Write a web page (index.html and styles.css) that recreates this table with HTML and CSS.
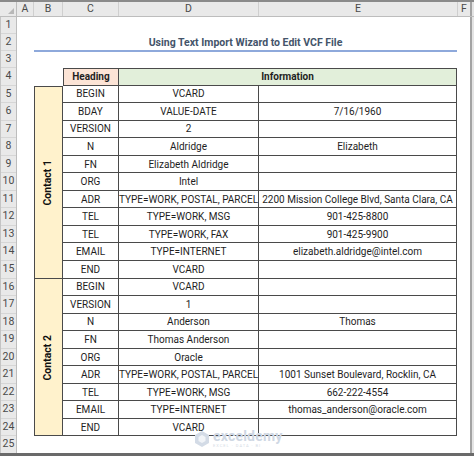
FILE: index.html
```html
<!DOCTYPE html>
<html>
<head>
<meta charset="utf-8">
<link rel="stylesheet" href="styles.css">
</head>
<body>
<div class="window">
  <div class="topband"></div>
  <div class="colheads">
    <div class="ch corner"><span class="tri"></span></div>
    <div class="ch col-a">A</div>
    <div class="ch col-b">B</div>
    <div class="ch col-c">C</div>
    <div class="ch col-d">D</div>
    <div class="ch col-e">E</div>
    <div class="ch col-f">F</div>
    <div class="frame"></div>
  </div>
  <div class="body">
    <div class="rowheads">
      <div class="rh r17">1</div><div class="rh r17">2</div><div class="rh r17">3</div>
      <div class="rh rt">4</div><div class="rh rt">5</div><div class="rh rt">6</div><div class="rh rt">7</div>
      <div class="rh rt">8</div><div class="rh rt">9</div><div class="rh rt">10</div><div class="rh rt">11</div>
      <div class="rh rt">12</div><div class="rh rt">13</div><div class="rh rt">14</div><div class="rh rt">15</div>
      <div class="rh rt">16</div><div class="rh rt">17</div><div class="rh rt">18</div><div class="rh rt">19</div>
      <div class="rh rt">20</div><div class="rh rt">21</div><div class="rh rt">22</div><div class="rh rt">23</div>
      <div class="rh rt">24</div><div class="rh rlast">25</div>
    </div>
    <div class="cells">
      <div class="row1"></div>
      <div class="row2"><div class="title">Using Text Import Wizard to Edit VCF File</div></div>
      <div class="row3"></div>
      <div class="table">
        <div class="blank"></div>
        <div class="c head">Heading</div>
        <div class="c info">Information</div>

        <div class="c contact contact1"><span>Contact 1</span></div>
        <div class="c">BEGIN</div><div class="c">VCARD</div><div class="c"></div>
        <div class="c">BDAY</div><div class="c">VALUE-DATE</div><div class="c">7/16/1960</div>
        <div class="c">VERSION</div><div class="c">2</div><div class="c"></div>
        <div class="c">N</div><div class="c">Aldridge</div><div class="c">Elizabeth</div>
        <div class="c">FN</div><div class="c">Elizabeth Aldridge</div><div class="c"></div>
        <div class="c">ORG</div><div class="c">Intel</div><div class="c"></div>
        <div class="c">ADR</div><div class="c">TYPE=WORK, POSTAL, PARCEL</div><div class="c">2200 Mission College Blvd, Santa Clara, CA</div>
        <div class="c">TEL</div><div class="c">TYPE=WORK, MSG</div><div class="c">901-425-8800</div>
        <div class="c">TEL</div><div class="c">TYPE=WORK, FAX</div><div class="c">901-425-9900</div>
        <div class="c">EMAIL</div><div class="c">TYPE=INTERNET</div><div class="c">elizabeth.aldridge@intel.com</div>
        <div class="c">END</div><div class="c">VCARD</div><div class="c"></div>

        <div class="c contact contact2"><span>Contact 2</span></div>
        <div class="c">BEGIN</div><div class="c">VCARD</div><div class="c"></div>
        <div class="c">VERSION</div><div class="c">1</div><div class="c"></div>
        <div class="c">N</div><div class="c">Anderson</div><div class="c">Thomas</div>
        <div class="c">FN</div><div class="c">Thomas Anderson</div><div class="c"></div>
        <div class="c">ORG</div><div class="c">Oracle</div><div class="c"></div>
        <div class="c">ADR</div><div class="c">TYPE=WORK, POSTAL, PARCEL</div><div class="c">1001 Sunset Boulevard, Rocklin, CA</div>
        <div class="c">TEL</div><div class="c">TYPE=WORK, MSG</div><div class="c">662-222-4554</div>
        <div class="c">EMAIL</div><div class="c">TYPE=INTERNET</div><div class="c">thomas_anderson@oracle.com</div>
        <div class="c">END</div><div class="c">VCARD</div><div class="c"></div>
      </div>
      <div class="row25"></div>
    </div>
    <div class="frame"></div>
  </div>
  <div class="bottomband"></div>
  <div class="watermark">
    <svg class="wm-icon" width="18" height="18" viewBox="0 0 18 18">
      <path d="M9 1 L16 5 L16 13 L9 17 L2 13 L2 5 Z" fill="#d3dbe6"/>
      <path d="M9 5 L12.5 7 L12.5 11 L9 13 L5.5 11 L5.5 7 Z" fill="#f1f4f8"/>
    </svg>
    <div class="wm-text">
      <div class="wm-name">exceldemy</div>
      <div class="wm-sub">EXCEL · DATA · BI</div>
    </div>
  </div>
</div>
</body>
</html>
```

FILE: styles.css
```css
* { box-sizing: border-box; }
html, body { margin: 0; padding: 0; background: #ffffff; }
body { font-family: Roboto, Lato, sans-serif; }

.window {
  position: relative;
  width: 474px;
  height: 456px;
  overflow: hidden;
  background: #ffffff;
  display: flex;
  flex-direction: column;
}

.topband { height: 2px; background: #8a8a8a; flex: none; }

.colheads {
  display: flex;
  height: 15px;
  flex: none;
  background: #e9e9e9;
  border-bottom: 1px solid #bdbdbd;
}
.ch {
  height: 100%;
  border-right: 1px solid #cfcfcf;
  color: #4a4a4a;
  font-size: 10.5px;
  display: flex;
  align-items: center;
  justify-content: center;
  line-height: 1;
}
.corner { width: 17px; position: relative; border-right-color: #bdbdbd; }
.tri {
  position: absolute;
  right: 2px;
  bottom: 2px;
  width: 0; height: 0;
  border-left: 6px solid transparent;
  border-bottom: 6px solid #b8b8b8;
}
.col-a { width: 17px; }
.col-b { width: 29px; }
.col-c { width: 56px; }
.col-d { width: 140px; }
.col-e { width: 199px; }
.col-f { width: 12px; border-right: none; }
.frame { width: 4px; flex: none; background: #e4e4e4; border-left: 2px solid #a3a3a3; }

.body { display: flex; flex: none; height: 436px; }

.rowheads {
  width: 17px;
  flex: none;
  display: flex;
  flex-direction: column;
  background: #e9e9e9;
  border-right: 1px solid #bdbdbd;
  border-left: 1px solid #c4c4c4;
}
.rh {
  display: flex;
  align-items: center;
  justify-content: center;
  font-size: 10.5px;
  color: #4a4a4a;
  border-bottom: 1px solid #d6d6d6;
  line-height: 1;
}
.r17 { height: 17px; }
.rt { height: 17.56px; }
.rlast { flex: 1; border-bottom: none; }

.cells { width: 453px; flex: none; display: flex; flex-direction: column; }
.row1, .row3 { height: 17px; }
.row2 { height: 17px; padding-left: 17px; }
.title {
  width: 423px;
  height: 18px;
  border-bottom: 2px solid #8ea9db;
  color: #44546a;
  font-weight: 700;
  font-size: 10.5px;
  text-align: center;
  line-height: 18px;
}

.table {
  margin-left: 17px;
  display: grid;
  grid-template-columns: 29px 56px 140px 198px;
  grid-template-rows: repeat(21, 17.56px);
}
.c {
  border-right: 1px solid #4a4a4a;
  border-bottom: 1px solid #4a4a4a;
  display: flex;
  align-items: center;
  justify-content: center;
  font-size: 10px;
  color: #1e1e1e;
  white-space: nowrap;
  line-height: 1;
  padding-top: 1px;
}
.head { background: #fce4d6; font-weight: 700; border-top: 1px solid #4a4a4a; border-left: 1px solid #4a4a4a; }
.info { background: #e2efda; font-weight: 700; grid-column: span 2; border-top: 1px solid #4a4a4a; }
.contact { background: #fff2cc; border-left: 1px solid #4a4a4a; }
.contact1 { grid-row: span 11; border-top: 1px solid #4a4a4a; }
.contact2 { grid-row: span 9; }
.contact span {
  writing-mode: vertical-rl;
  transform: rotate(180deg);
  font-weight: 700;
  font-size: 10.5px;
  color: #111;
}

.row25 { flex: 1; }

.bottomband { flex: none; height: 3px; background: #6a6a6a; }

.watermark {
  position: absolute;
  left: 193px;
  top: 430px;
  display: flex;
  align-items: center;
  gap: 2px;
}
.wm-name { font-size: 14px; font-weight: 700; color: #cfd8e4; line-height: 13px; letter-spacing: 0.2px; }
.wm-sub { font-size: 4px; color: #d5dce6; letter-spacing: 1px; line-height: 5px; }
```
